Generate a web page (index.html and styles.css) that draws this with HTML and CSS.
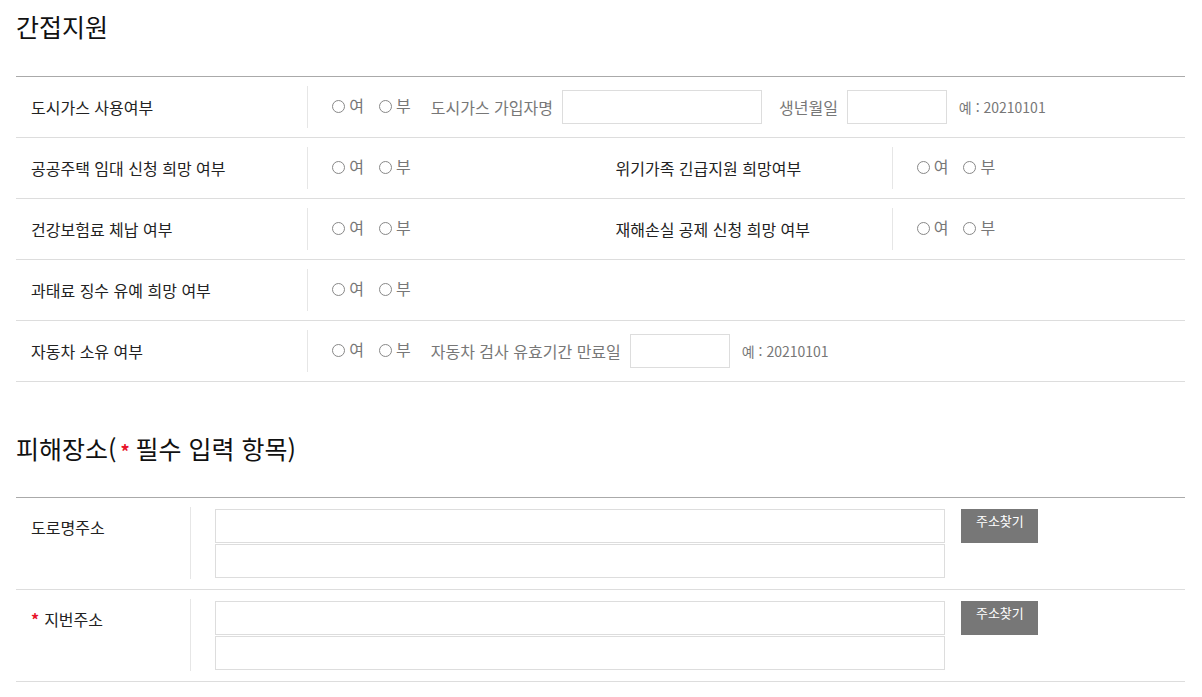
FILE: index.html
```html
<!DOCTYPE html>
<html lang="ko">
<head>
    <meta charset="UTF-8">
    <meta name="viewport" content="width=device-width, initial-scale=1.0">
    <title>간접지원</title>
    <link rel="stylesheet" href="styles.css">
</head>
<body>
    <div class="wrap">
        <h2 class="sec-title">간접지원</h2>
        <div class="grid-table">
            <div class="row">
                <div class="th">도시가스 사용여부</div>
                <div class="td span3">
                    <label class="radio"><input type="radio" name="gas">여</label>
                    <label class="radio"><input type="radio" name="gas">부</label>
                    <span class="txt">도시가스 가입자명</span>
                    <input type="text" class="inp w200">
                    <span class="txt">생년월일</span>
                    <input type="text" class="inp w100">
                    <span class="hint">예 : 20210101</span>
                </div>
            </div>
            <div class="row">
                <div class="th">공공주택 임대 신청 희망 여부</div>
                <div class="td">
                    <label class="radio"><input type="radio" name="house">여</label>
                    <label class="radio"><input type="radio" name="house">부</label>
                </div>
                <div class="th">위기가족 긴급지원 희망여부</div>
                <div class="td">
                    <label class="radio"><input type="radio" name="crisis">여</label>
                    <label class="radio"><input type="radio" name="crisis">부</label>
                </div>
            </div>
            <div class="row">
                <div class="th">건강보험료 체납 여부</div>
                <div class="td">
                    <label class="radio"><input type="radio" name="health">여</label>
                    <label class="radio"><input type="radio" name="health">부</label>
                </div>
                <div class="th">재해손실 공제 신청 희망 여부</div>
                <div class="td">
                    <label class="radio"><input type="radio" name="loss">여</label>
                    <label class="radio"><input type="radio" name="loss">부</label>
                </div>
            </div>
            <div class="row">
                <div class="th">과태료 징수 유예 희망 여부</div>
                <div class="td span3">
                    <label class="radio"><input type="radio" name="fine">여</label>
                    <label class="radio"><input type="radio" name="fine">부</label>
                </div>
            </div>
            <div class="row">
                <div class="th">자동차 소유 여부</div>
                <div class="td span3">
                    <label class="radio"><input type="radio" name="car">여</label>
                    <label class="radio"><input type="radio" name="car">부</label>
                    <span class="txt">자동차 검사 유효기간 만료일</span>
                    <input type="text" class="inp w100">
                    <span class="hint">예 : 20210101</span>
                </div>
            </div>
        </div>

        <h2 class="sec-title second">피해장소(<span class="req">*</span>필수 입력 항목)</h2>
        <div class="addr-table">
            <div class="addr-row">
                <div class="addr-th">도로명주소</div>
                <div class="addr-td">
                    <div class="addr-inputs">
                        <input type="text" class="inp addr">
                        <input type="text" class="inp addr">
                    </div>
                    <button class="btn-find">주소찾기</button>
                </div>
            </div>
            <div class="addr-row">
                <div class="addr-th"><span class="req small">*</span>지번주소</div>
                <div class="addr-td">
                    <div class="addr-inputs">
                        <input type="text" class="inp addr">
                        <input type="text" class="inp addr">
                    </div>
                    <button class="btn-find">주소찾기</button>
                </div>
            </div>
        </div>
    </div>
</body>
</html>
```

FILE: styles.css
```css
* {
    margin: 0;
    padding: 0;
    box-sizing: border-box;
}

body {
    font-family: "Noto Sans CJK KR", "Noto Sans", sans-serif;
    color: #222;
    background: #fff;
}

.wrap {
    padding: 8px 17px 0 16px;
}

.sec-title {
    font-size: 25px;
    font-weight: 400;
    line-height: 36px;
    color: #111;
    margin-bottom: 32px;
}

.sec-title.second {
    margin-top: 48px;
    margin-bottom: 28px;
}

.req {
    color: #e8132a;
    font-size: 18px;
    font-weight: 700;
    margin: 0 6px 0 4px;
}

.req.small {
    font-size: 16px;
    margin: 0 5px 0 0;
}

/* 간접지원 */
.grid-table {
    border-top: 1px solid #aaa;
}

.row {
    display: grid;
    grid-template-columns: repeat(4, 1fr);
    padding: 9px 0;
    border-bottom: 1px solid #ddd;
}

.th {
    display: flex;
    align-items: center;
    min-height: 42px;
    padding-left: 15px;
    font-size: 16px;
    border-right: 1px solid #e6e6e6;
}

.td {
    display: flex;
    align-items: center;
    padding-left: 24px;
    font-size: 16px;
    color: #777;
}

.td.span3 {
    grid-column: span 3;
}

.radio {
    display: inline-flex;
    align-items: center;
    margin-right: 15px;
    cursor: pointer;
    position: relative;
    top: -2px;
}

.radio input {
    appearance: none;
    -webkit-appearance: none;
    width: 13px;
    height: 13px;
    border: 1px solid #888;
    border-radius: 50%;
    margin-right: 4px;
    position: relative;
    top: 1px;
}

.radio input:checked {
    background: radial-gradient(#666 40%, #fff 45%);
}

.txt {
    margin-left: 5px;
    margin-right: 9px;
}

.hint {
    font-size: 14px;
}

.inp {
    height: 34px;
    border: 1px solid #ddd;
    outline: none;
    font-family: inherit;
    font-size: 14px;
    padding: 0 8px;
    margin-right: 12px;
}

.w200 {
    width: 200px;
}

.w100 {
    width: 100px;
}

/* 피해장소 */
.addr-table {
    border-top: 1px solid #aaa;
}

.addr-row {
    display: flex;
    padding: 9px 0 10px;
    border-bottom: 1px solid #ddd;
}

.addr-th {
    width: 15%;
    min-height: 72px;
    padding: 8px 0 0 15px;
    font-size: 16px;
    border-right: 1px solid #e6e6e6;
}

.addr-td {
    display: flex;
    align-items: flex-start;
    padding: 2px 0 0 24px;
}

.addr-inputs {
    display: flex;
    flex-direction: column;
    gap: 1px;
}

.inp.addr {
    width: 730px;
    margin-right: 0;
}

.btn-find {
    width: 77px;
    height: 34px;
    margin-left: 16px;
    border: none;
    background: #777;
    color: #fff;
    font-family: inherit;
    font-size: 13px;
    line-height: 20px;
    padding-bottom: 10px;
}
```
